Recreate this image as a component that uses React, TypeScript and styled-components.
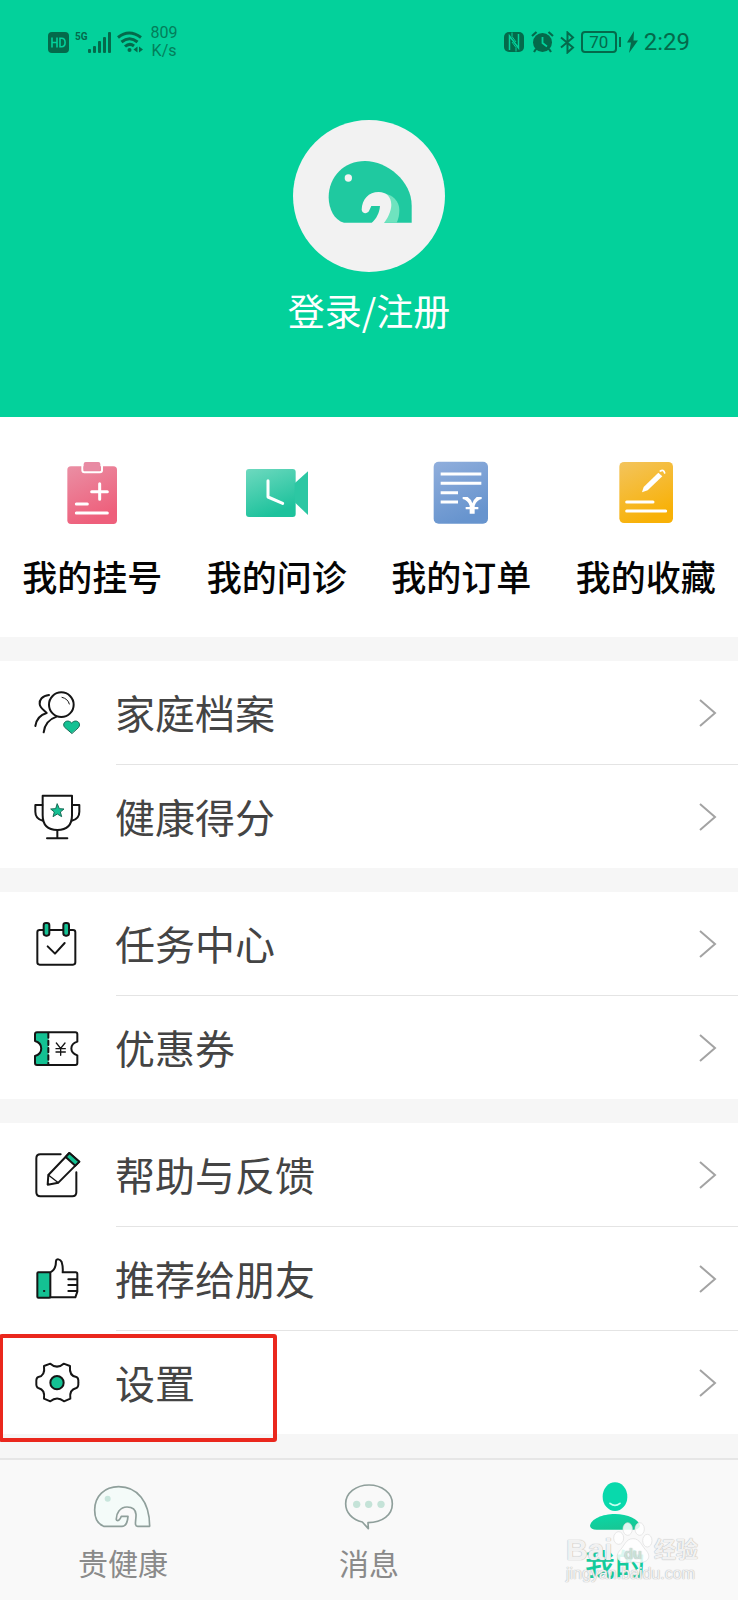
import React from "react";
import styled, { createGlobalStyle } from "styled-components";

const INK = "#151515";
const MINT = "#14c193";
const STATUS = "#046a4b";

const GlobalStyle = createGlobalStyle`
  *, *::before, *::after { box-sizing: border-box; }
  body {
    margin: 0;
    background: #f6f6f6;
    font-family: "Noto Sans CJK SC", "Noto Sans", sans-serif;
  }
  button {
    margin: 0;
    padding: 0;
    border: 0;
    background: none;
    font: inherit;
    color: inherit;
    cursor: pointer;
  }
  ul { margin: 0; padding: 0; list-style: none; }
  svg { display: block; flex: none; }
`;

const Page = styled.div`
  display: flex;
  flex-direction: column;
  min-height: 100vh;
`;

const Header = styled.header`
  display: flex;
  flex-direction: column;
  align-items: center;
  padding-bottom: 83px;
  background: #03d19b;
`;

const StatusBar = styled.div`
  display: flex;
  align-items: center;
  justify-content: space-between;
  align-self: stretch;
  height: 84px;
  padding: 0 48px;
  color: ${STATUS};
  font-family: Roboto, sans-serif;
`;

const StatusGroup = styled.div`
  display: flex;
  align-items: center;
  gap: 6px;
`;

const Speed = styled.span`
  padding-left: 2px;
  font-size: 16px;
  line-height: 18px;
  text-align: center;
  opacity: 0.8;
`;

const BatteryShell = styled.span`
  display: flex;
  align-items: center;
  gap: 2px;

  &::after {
    content: "";
    width: 2px;
    height: 10px;
    background: ${STATUS};
  }
`;

const BatteryLevel = styled.span`
  width: 36px;
  height: 22px;
  border: 2px solid ${STATUS};
  border-radius: 4px;
  font-size: 17px;
  line-height: 18px;
  text-align: center;
`;

const Clock = styled.time`
  font-size: 24px;
  line-height: 28px;
`;

const LoginButton = styled.button`
  display: flex;
  flex-direction: column;
  align-items: center;
  gap: 14px;
  margin-top: 36px;
  color: #fff;
  font-size: 37px;
  line-height: 48px;
`;

const Shortcuts = styled.nav`
  display: grid;
  grid-template-columns: repeat(4, 1fr);
  padding: 40px 0 37px;
  background: #fff;
`;

const Shortcut = styled.button`
  display: flex;
  flex-direction: column;
  align-items: center;
  gap: 23px;
  color: #050505;
  font-size: 35px;
  font-weight: 500;
  line-height: 48px;
  white-space: nowrap;
`;

const Menu = styled.main`
  display: flex;
  flex-direction: column;
  gap: 24px;
  padding: 24px 0;
`;

const Group = styled.ul`
  background: #fff;
`;

const Item = styled.li`
  position: relative;

  & + &::before {
    content: "";
    display: block;
    height: 1px;
    margin-left: 116px;
    background: #e4e4e4;
  }
`;

const ItemButton = styled.button`
  display: flex;
  align-items: center;
  width: 100%;
  height: 103px;
  padding: 0 21px 0 33px;
  color: #444;
  font-size: 40px;
  line-height: 56px;
  text-align: left;
`;

const ItemLabel = styled.span`
  flex: 1;
  padding: 0 0 2px 34px;
`;

const Highlight = styled.span`
  position: absolute;
  z-index: 1;
  top: 4px;
  left: -1px;
  width: 278px;
  height: 108px;
  border: 4px solid #ea271d;
  border-radius: 3px;
  pointer-events: none;
`;

const TabBar = styled.nav`
  display: grid;
  grid-template-columns: repeat(3, 1fr);
  margin-top: auto;
  border-top: 2px solid #e6e6e6;
  background: #f9f9f9;
  position: relative;
`;

const Tab = styled.button<{ $active: boolean }>`
  display: flex;
  flex-direction: column;
  align-items: center;
  gap: 12px;
  padding: 22px 0 18px;
  color: ${(p) => (p.$active ? "#12cb9c" : "#8a8a8a")};
  font-size: 30px;
  font-weight: ${(p) => (p.$active ? 500 : 400)};
  line-height: 40px;
`;

const Watermark = styled.div`
  position: absolute;
  right: 40px;
  bottom: 16px;
  width: 132px;
  color: rgba(255, 255, 255, 0.85);
  font-family: "Liberation Sans", "Noto Sans CJK SC", sans-serif;
  text-shadow: 0 0 1px #aaa, 0 0 1px #ccc;
  white-space: nowrap;
  pointer-events: none;
`;

const WatermarkBrand = styled.div`
  display: flex;
  align-items: flex-end;
  justify-content: space-between;
  font-size: 30px;
  font-weight: 700;
  line-height: 28px;
`;

const WatermarkName = styled.span`
  font-size: 22px;
`;

const WatermarkSite = styled.div`
  font-size: 16px;
  line-height: 20px;
`;

/* ---------- status bar icons ---------- */

const HdIcon = () => (
  <svg width="21" height="21" viewBox="0 0 21 21">
    <rect width="21" height="21" rx="4" fill={STATUS} />
    <path d="M4 5.5v10M9 5.5v10M4 10.5h5M12 6.3v8.4h1.5q3.6 0 3.6-4.2t-3.6-4.2z" fill="none" stroke="#03d19b" strokeWidth="1.6" />
  </svg>
);

const SignalBox = styled.span`
  display: flex;
  align-items: flex-start;
  height: 23px;
  font-size: 10px;
  font-weight: 700;
  line-height: 11px;
`;

const SignalIcon = () => (
  <svg width="23" height="23" viewBox="0 0 23 23" fill={STATUS}>
    <rect x="0" y="18" width="3" height="4" rx="1" />
    <rect x="5" y="15" width="3" height="7" rx="1" />
    <rect x="10" y="10" width="3" height="12" rx="1" />
    <rect x="15" y="6" width="3" height="16" rx="1" />
    <rect x="20" y="1" width="3" height="21" rx="1" />
  </svg>
);

const WifiIcon = () => (
  <svg width="26" height="22" viewBox="0 0 26 22" fill="none" stroke={STATUS} strokeWidth="3">
    <path d="M1 6.5Q12 -2.5 24 6.5M4.500 11Q12.500 4.500 20.500 11M8 15.500Q12.500 11.500 17 15" />
    <circle cx="12.500" cy="19" r="2" fill={STATUS} stroke="none" />
    <path d="M20.500 15.500v6l-4-3zM22 15.500v6l4-3z" fill={STATUS} stroke="none" />
  </svg>
);

const NfcIcon = () => (
  <svg width="21" height="22" viewBox="0 0 21 22">
    <rect x="0" y="1" width="20" height="20" rx="5" fill={STATUS} />
    <path d="M5.500 19V5L14.500 17V3" fill="none" stroke="#03d19b" strokeWidth="1.500" />
    <path d="M8 1.500V5.500L12 11M12 20.500V16.500L8 11" fill="none" stroke="#03d19b" strokeWidth="1" />
  </svg>
);

const AlarmIcon = () => (
  <svg width="23" height="22" viewBox="0 0 23 22">
    <circle cx="11.500" cy="11.500" r="9.500" fill={STATUS} />
    <path d="M1 5l4.500-4M22 5l-4.500-4M5 18l-2 3M18 18l2 3" stroke={STATUS} strokeWidth="2.200" />
    <path d="M11.500 6v6l4.500 3.500" fill="none" stroke="#03d19b" strokeWidth="1.800" />
  </svg>
);

const BluetoothIcon = () => (
  <svg width="15" height="23" viewBox="0 0 15 23" fill="none" stroke={STATUS} strokeWidth="2">
    <path d="M1 6.500l12 10-5.500 5V1.500l5.500 5-12 10" />
  </svg>
);

const BoltIcon = () => (
  <svg width="11" height="22" viewBox="0 0 11 22" fill={STATUS}>
    <path d="M7 0L0 11.500h4L2 22l9-12.500H6.500z" />
  </svg>
);

/* ---------- profile and shortcuts ---------- */

const Avatar = () => (
  <svg width="152" height="152" viewBox="69 60 456 456">
    <circle cx="297" cy="288" r="228" fill="#f2f2f2" />
    <path d="M222 368C193 362 176 326 176 292C176 230 222 183 285 183C352 183 425 244 425 316V368Z" fill="#1fc9a0" />
    <circle cx="235" cy="234" r="11" fill="#f2f2f2" />
    <path d="M340 280C368 284 388 304 388 330C388 346 385 358 380 368H335Z" fill="#6fe3bf" />
    <path d="M275 329C276 298 296 276 326 276C350 276 364 292 364 314C364 334 352 356 342 369H305C319 356 328 340 330 318H304L297 333C291 343 276 341 275 329Z" fill="#f2f2f2" />
  </svg>
);

const QuickSvg = styled.svg.attrs({ width: 72, height: 72 })`
  fill: none;
  stroke: #fff;
  stroke-width: 9;
  stroke-linecap: round;
  stroke-linejoin: round;
`;

type GradientProps = { id: string; from: string; to: string };
const Gradient = ({ id, from, to }: GradientProps) => (
  <linearGradient id={id} x1="0" y1="0" x2="0.4" y2="1">
    <stop offset="0" stopColor={from} />
    <stop offset="1" stopColor={to} />
  </linearGradient>
);

const RegisterIcon = () => (
  <QuickSvg viewBox="169 51 216 216">
    <Gradient id="rose" from="#ea8fa4" to="#ee5f7b" />
    <rect x="203" y="79" width="149" height="173" rx="11" fill="url(#rose)" stroke="none" />
    <path d="M248 76V91Q248 97 254 97H301Q307 97 307 91V76" strokeWidth="6" />
    <rect x="252" y="66" width="50" height="26" rx="6" fill="#e88aa3" stroke="none" />
    <path d="M300 131V178M276 155H323M230 192H263M230 219H323" />
  </QuickSvg>
);

const ConsultIcon = () => (
  <QuickSvg viewBox="723 51 216 216">
    <Gradient id="mint" from="#6ed9bf" to="#1dc29c" />
    <rect x="738" y="87" width="149" height="144" rx="9" fill="url(#mint)" stroke="none" />
    <path d="M884 130L924 94V225L884 187Z" fill="#2cc7a3" stroke="none" />
    <path d="M804 122V171L848 190" />
  </QuickSvg>
);

const OrderIcon = () => (
  <QuickSvg viewBox="169 51 216 216">
    <Gradient id="sky" from="#90aedc" to="#6794ce" />
    <rect x="195" y="65" width="163" height="186" rx="15" fill="url(#sky)" stroke="none" />
    <path d="M216 102H338M216 130H338M216 158H268M216 186H268" strokeLinecap="butt" />
    <path d="M282 171H297Q307 177 311 190Q316 177 324 171H339V177Q324 180 318 197V201H329V208H318V221H303V208H291V201H303V197Q297 180 282 177Z" fill="#fff" stroke="none" />
  </QuickSvg>
);

const FavoriteIcon = () => (
  <QuickSvg viewBox="723 51 216 216">
    <Gradient id="amber" from="#f3c45d" to="#f8b107" />
    <rect x="751" y="66" width="161" height="183" rx="14" fill="url(#amber)" stroke="none" />
    <path d="M819 157L824 141L868 98L880 109L836 151Z" fill="#fff" stroke="none" />
    <path d="M874 93Q884 87 887 99" strokeWidth="5" />
    <path d="M773 186H852M773 213H890" />
  </QuickSvg>
);

/* ---------- menu icons ---------- */

const LineSvg = styled.svg.attrs({ width: 48, height: 48 })`
  fill: none;
  stroke: ${INK};
  stroke-width: 6;
  stroke-linecap: round;
  stroke-linejoin: round;
`;

const FamilyIcon = () => (
  <LineSvg viewBox="99 174 144 144">
    <path d="M147 192C126 194 118 207 119 219C120 232 132 237 140 246C122 251 109 266 106 285" />
    <circle cx="184" cy="221" r="37" />
    <path d="M170 257C149 264 134 280 131 304" />
    <path d="M186 199Q204 203 208 219" strokeWidth="3" />
    <path d="M215 307L194 289C184 276 202 262 215 276C228 262 246 276 236 289Z" fill={MINT} stroke="#176b56" strokeWidth="3" />
  </LineSvg>
);

const ScoreIcon = () => (
  <LineSvg viewBox="99 486 144 144">
    <path d="M128 494H216V553Q216 597 172 597Q128 597 128 553Z" />
    <path d="M127 522H106V542Q106 564 129 569M217 522H238V542Q238 564 215 569" />
    <path d="M172 598V621M141 622H202" />
    <path d="M172 519L178 533L192 534L181 543L185 557L172 549L159 557L163 543L152 534L166 533Z" fill={MINT} strokeWidth="3" stroke="#176b56" />
  </LineSvg>
);

const TaskIcon = () => (
  <LineSvg viewBox="99 118 144 144">
    <rect x="112" y="148" width="114" height="104" rx="7" />
    <rect x="131" y="127" width="17" height="38" rx="7" fill={MINT} />
    <rect x="190" y="127" width="17" height="38" rx="7" fill={MINT} />
    <path d="M143 197L165 219L194 187" />
  </LineSvg>
);

const CouponIcon = () => (
  <LineSvg viewBox="99 430 144 144">
    <path d="M145 455H111Q105 455 105 461V481C130 488 130 518 105 526V547Q105 553 111 553H145Z" fill={MINT} stroke="none" />
    <path d="M111 455H226Q232 455 232 461V483C208 491 208 516 232 524V547Q232 553 226 553H111Q105 553 105 547V526C130 518 130 488 105 481V461Q105 455 111 455Z" />
    <path d="M145 458V551" strokeDasharray="13 9" />
    <path d="M169 487L182 503L195 487M182 503V524M168 504H196M168 514H196" strokeWidth="4" />
  </LineSvg>
);

const FeedbackIcon = () => (
  <LineSvg viewBox="99 122 144 144">
    <path d="M182 132H121Q109 132 109 144V246Q109 258 121 258H217Q229 258 229 246V186" />
    <path d="M143 223L145 194L208 128L238 154L175 217Z" />
    <path d="M208 128L238 154L226 166L197 140Z" fill={MINT} />
    <path d="M145 194L175 217" strokeWidth="4" />
  </LineSvg>
);

const ShareIcon = () => (
  <LineSvg viewBox="99 435 144 144">
    <rect x="112" y="487" width="39" height="76" rx="3" fill={MINT} />
    <circle cx="132" cy="543" r="2" strokeWidth="3" />
    <path d="M151 487C164 481 168 470 168 453C169 445 181 447 185 456C189 469 189 477 188 487H227Q232 487 232 492V545L226 562H151" />
    <path d="M205 508H231M205 525H231M205 543H231" />
  </LineSvg>
);

const SettingsIcon = () => (
  <LineSvg viewBox="99 115 144 144">
    <path d="M132 136L151 129Q171 147 191 129L210 136Q207 166 229 169Q236 171 235 186Q236 200 229 202Q207 207 211 234L192 242Q171 225 151 242L132 234Q136 207 115 202Q108 200 109 186Q108 171 115 169Q136 166 132 136Z" />
    <circle cx="171" cy="186" r="20" fill={MINT} />
  </LineSvg>
);

const Chevron = () => (
  <svg width="20" height="32" viewBox="0 0 20 32" fill="none" stroke="#a3a3a3" strokeWidth="2">
    <path d="M3 3L18 16L3 29" />
  </svg>
);

/* ---------- tab bar icons ---------- */

const TabSvg = styled.svg.attrs({ width: 60, height: 48 })`
  fill: none;
  stroke: #8f9f9b;
  stroke-width: 5;
  stroke-linejoin: round;
`;

const HomeTabIcon = () => (
  <TabSvg viewBox="279 486 180 144">
    <path d="M311 619C293 612 284 594 284 570C284 528 314 500 356 500C412 500 449 545 449 619H413C401 619 409 600 408 583C407 569 397 561 381 561C360 561 348 580 349 599C352 605 360 601 364 589H384C383 602 378 619 366 619Z" fill="#f4fbf9" />
    <circle cx="323" cy="536" r="9" fill="#c8e5dc" stroke="none" />
  </TabSvg>
);

const MessageTabIcon = () => (
  <TabSvg viewBox="117 126 180 144">
    <path d="M205 266L204 248C247 248 277 225 277 191C277 159 246 135 207 135C167 135 137 160 137 191C137 218 157 239 187 246Z" />
    <g fill="#c5e3d8" stroke="none">
      <circle cx="170" cy="193" r="11" />
      <circle cx="206" cy="193" r="11" />
      <circle cx="243" cy="193" r="11" />
    </g>
  </TabSvg>
);

const MineTabIcon = () => (
  <TabSvg viewBox="855 126 180 144">
    <Gradient id="person" from="#08d9a8" to="#17c795" />
    <ellipse cx="945" cy="170" rx="37" ry="43" fill="#08d9ac" stroke="none" />
    <path d="M870 258C872 237 907 222 945 222C983 222 1017 237 1020 258Q1017 269 1000 269H890Q872 269 870 258Z" fill="url(#person)" stroke="none" />
    <path d="M930 190Q945 202 960 190" stroke="#c4fff0" strokeLinecap="round" />
  </TabSvg>
);

const PawIcon = () => (
  <svg width="40" height="42" viewBox="0 0 120 126" fill="#fff" fillOpacity="0.85" stroke="#ddd" strokeWidth="2">
    <ellipse cx="17" cy="48" rx="15" ry="19" />
    <ellipse cx="44" cy="21" rx="14" ry="19" />
    <ellipse cx="80" cy="21" rx="14" ry="19" />
    <ellipse cx="103" cy="56" rx="14" ry="19" />
    <path d="M60 50C82 50 86 73 101 87C119 111 96 129 60 119C24 129 1 111 19 87C34 73 38 50 60 50Z" />
    <text x="60" y="110" textAnchor="middle" fontSize="44" fill="#cfe9e0" stroke="none">du</text>
  </svg>
);

/* ---------- content ---------- */

const shortcuts = [
  { label: "我的挂号", icon: <RegisterIcon /> },
  { label: "我的问诊", icon: <ConsultIcon /> },
  { label: "我的订单", icon: <OrderIcon /> },
  { label: "我的收藏", icon: <FavoriteIcon /> },
];

const groups = [
  [
    { label: "家庭档案", icon: <FamilyIcon /> },
    { label: "健康得分", icon: <ScoreIcon /> },
  ],
  [
    { label: "任务中心", icon: <TaskIcon /> },
    { label: "优惠券", icon: <CouponIcon /> },
  ],
  [
    { label: "帮助与反馈", icon: <FeedbackIcon /> },
    { label: "推荐给朋友", icon: <ShareIcon /> },
    { label: "设置", icon: <SettingsIcon />, highlighted: true },
  ],
] as { label: string; icon: React.ReactNode; highlighted?: boolean }[][];

const tabs = [
  { label: "贵健康", icon: <HomeTabIcon />, active: false },
  { label: "消息", icon: <MessageTabIcon />, active: false },
  { label: "我的", icon: <MineTabIcon />, active: true },
];

export default function App() {
  return (
    <Page>
      <GlobalStyle />
      <Header>
        <StatusBar>
          <StatusGroup>
            <HdIcon />
            <SignalBox>
              5G
              <SignalIcon />
            </SignalBox>
            <WifiIcon />
            <Speed>
              809
              <br />
              K/s
            </Speed>
          </StatusGroup>
          <StatusGroup>
            <NfcIcon />
            <AlarmIcon />
            <BluetoothIcon />
            <BatteryShell>
              <BatteryLevel>70</BatteryLevel>
            </BatteryShell>
            <BoltIcon />
            <Clock>2:29</Clock>
          </StatusGroup>
        </StatusBar>
        <LoginButton type="button">
          <Avatar />
          登录/注册
        </LoginButton>
      </Header>

      <Shortcuts>
        {shortcuts.map((s) => (
          <Shortcut key={s.label} type="button">
            {s.icon}
            {s.label}
          </Shortcut>
        ))}
      </Shortcuts>

      <Menu>
        {groups.map((items) => (
          <Group key={items[0].label}>
            {items.map((item) => (
              <Item key={item.label}>
                <ItemButton type="button">
                  {item.icon}
                  <ItemLabel>{item.label}</ItemLabel>
                  <Chevron />
                </ItemButton>
                {item.highlighted && <Highlight />}
              </Item>
            ))}
          </Group>
        ))}
      </Menu>

      <TabBar>
        {tabs.map((t) => (
          <Tab key={t.label} type="button" $active={t.active} aria-current={t.active ? "page" : undefined}>
            {t.icon}
            {t.label}
          </Tab>
        ))}
        <Watermark>
          <WatermarkBrand>
            <span>Bai</span>
            <PawIcon />
            <WatermarkName>经验</WatermarkName>
          </WatermarkBrand>
          <WatermarkSite>jingyan.baidu.com</WatermarkSite>
        </Watermark>
      </TabBar>
    </Page>
  );
}
